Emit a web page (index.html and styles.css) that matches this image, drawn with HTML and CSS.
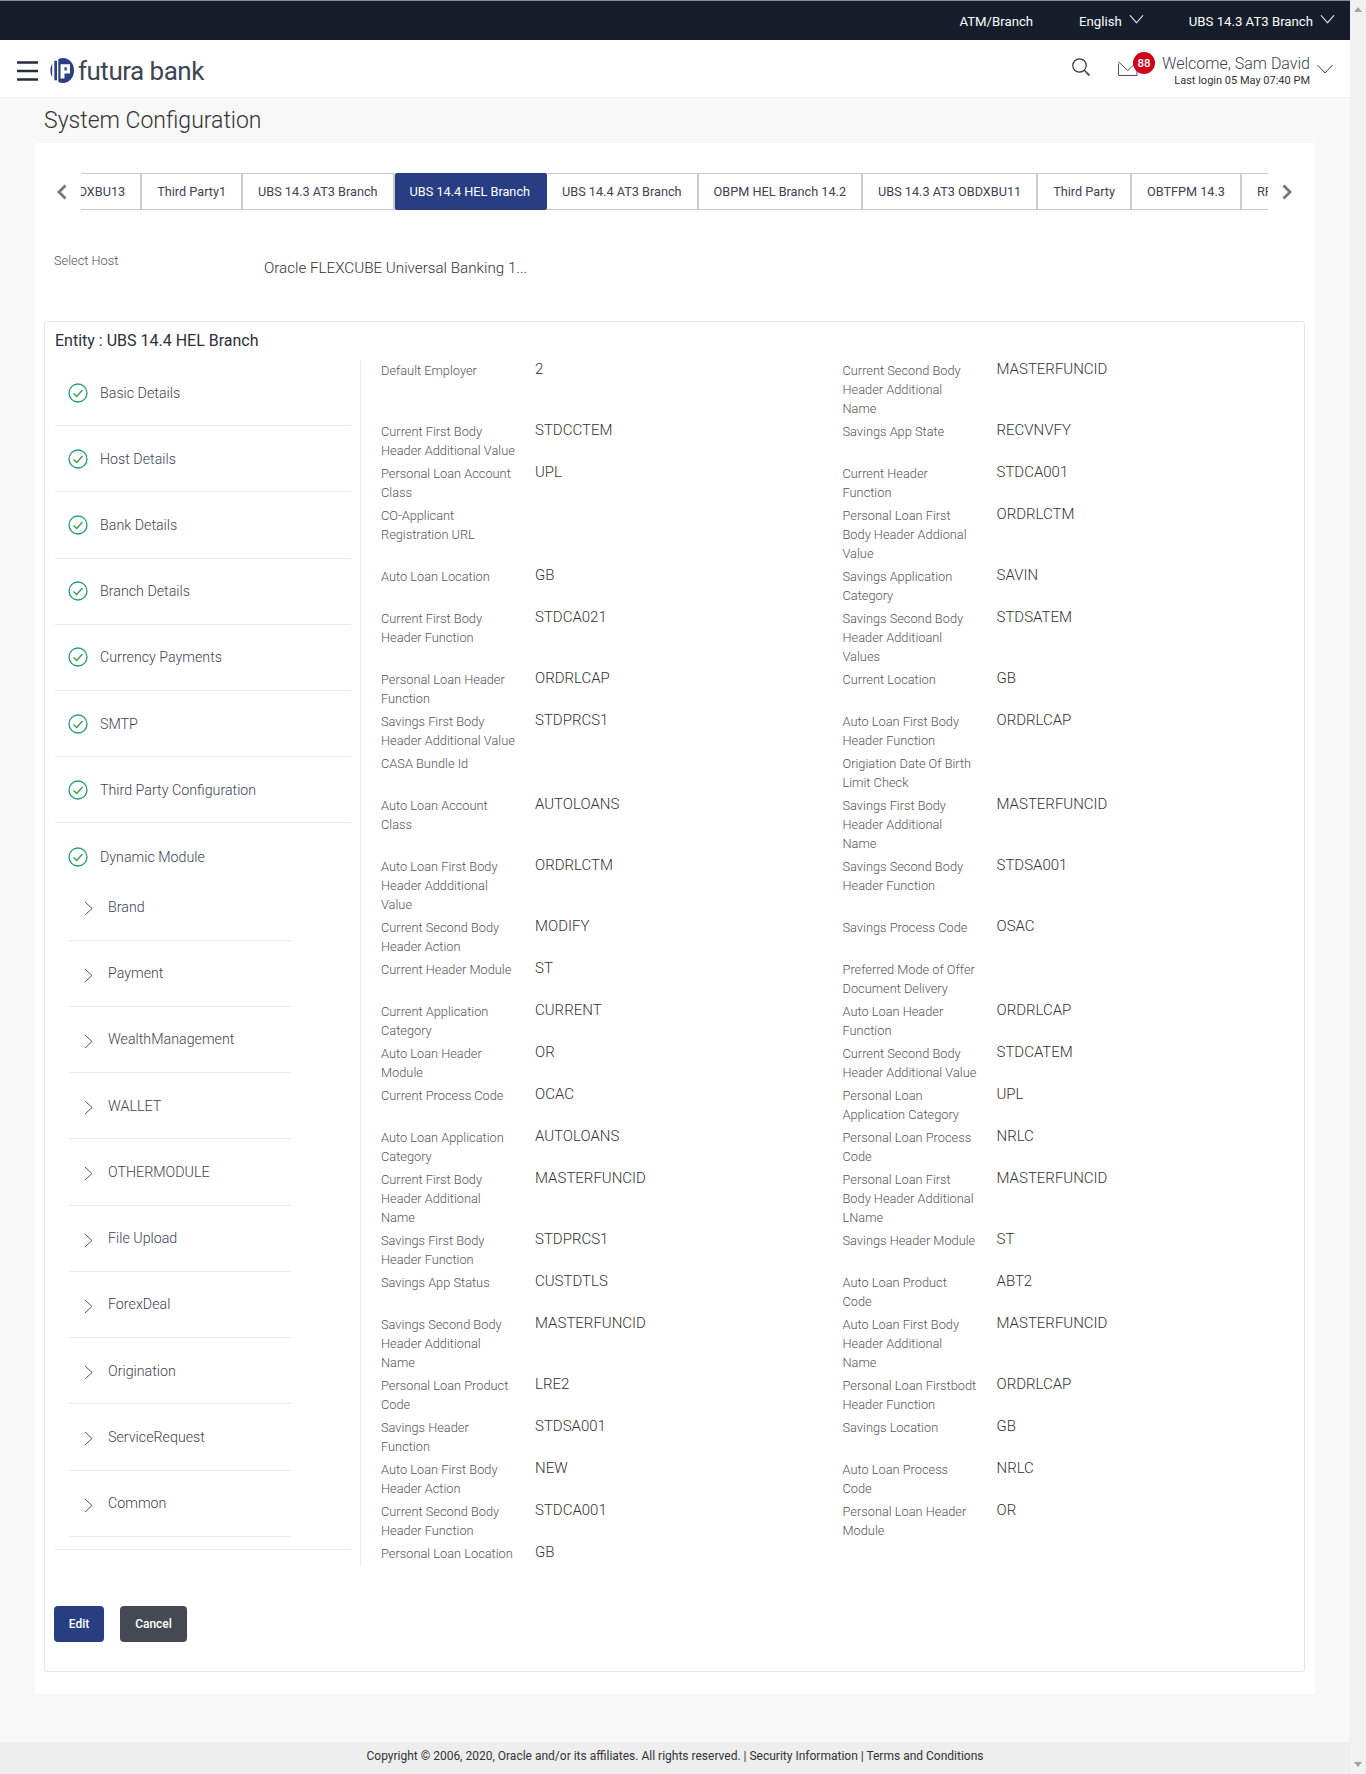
FILE: index.html
```html
<!DOCTYPE html>
<html lang="en">
<head>
<meta charset="utf-8">
<title>System Configuration</title>
<link rel="stylesheet" href="styles.css">
</head>
<body>
<div class="frame">
<div class="page">
  <div class="topbar">
    <span class="top-item atm">ATM/Branch</span>
    <span class="top-item lang">English</span>
    <svg class="top-chev" viewBox="0 0 16 10"><path d="M1 1l7 8 7-8"/></svg>
    <span class="top-item ent">UBS 14.3 AT3 Branch</span>
    <svg class="top-chev last" viewBox="0 0 16 10"><path d="M1 1l7 8 7-8"/></svg>
  </div>
  <header class="header">
    <svg class="burger" viewBox="0 0 21 20"><path d="M0 1.500h21M0 10h21M0 18.500h21"/></svg>
    <svg class="logo" viewBox="0 0 24 25">
      <path class="logo-b" d="M2.200 5.500v14A13 13 0 0 1 .4 12.500 13 13 0 0 1 2.200 5.500z"/>
      <path class="logo-b" d="M4.300 2.800h2.700v19.500h-2.700z"/>
      <path class="logo-b" d="M8.300 1.200A12.500 12.500 0 0 1 13 0c6.500 0 11 5.600 11 12.500S19.500 25 13 25a12.500 12.500 0 0 1-4.700-1z"/>
      <path class="logo-w" d="M10.500 20.500V6.200h9.500v9.300h-5.500v5zM14.500 9.300v3.200h2.200V9.300z"/>
    </svg>
    <span class="brand">futura bank</span>
    <div class="head-right">
      <svg class="search" viewBox="0 0 19 19"><circle cx="7.500" cy="7.500" r="6.700"/><path d="M12.500 12.500l1.500 1.500"/><path class="thick" d="M14 14l3.500 3.500"/></svg>
      <span class="mail">
        <svg class="mail-ico" viewBox="0 0 20 15"><path d="M.5 2.500v12h18.500v-12M.5 .8l9.300 8.700L19 .8"/></svg>
        <span class="badge">88</span>
      </span>
      <div class="welcome">
        <div class="welcome-name">Welcome, Sam David</div>
        <div class="welcome-last">Last login 05 May 07:40 PM</div>
      </div>
      <svg class="user-chev" viewBox="0 0 16 10"><path d="M.5 1l7.500 8 7.500-8"/></svg>
    </div>
  </header>
  <main class="main">
    <h1 class="title">System Configuration</h1>
    <section class="panel">
      <div class="tabs">
        <svg class="arrow" viewBox="0 0 11 16"><path d="M9.500 1.500L3 8l6.500 6.500"/></svg>
        <div class="strip">
          <div class="track">
            <span class="tab">UBS 14.3 AT3 OBDXBU13</span>
            <span class="tab">Third Party1</span>
            <span class="tab">UBS 14.3 AT3 Branch</span>
            <span class="tab active">UBS 14.4 HEL Branch</span>
            <span class="tab">UBS 14.4 AT3 Branch</span>
            <span class="tab">OBPM HEL Branch 14.2</span>
            <span class="tab">UBS 14.3 AT3 OBDXBU11</span>
            <span class="tab">Third Party</span>
            <span class="tab">OBTFPM 14.3</span>
            <span class="tab">RFI</span>
          </div>
        </div>
        <svg class="arrow next" viewBox="0 0 11 16"><path d="M1.500 1.500L8 8l-6.500 6.500"/></svg>
      </div>
      <div class="host">
        <span class="host-label">Select Host</span>
        <span class="host-value">Oracle FLEXCUBE Universal Banking 1...</span>
      </div>
      <div class="box">
        <div class="entity">Entity : UBS 14.4 HEL Branch</div>
        <div class="content">
          <nav class="nav">
            <div class="nav-row"><svg class="check" viewBox="0 0 20 20"><circle cx="10" cy="10" r="9"/><path d="M5.500 10.500l3.200 3 5.800-6.500"/></svg>Basic Details</div>
            <div class="nav-row"><svg class="check" viewBox="0 0 20 20"><circle cx="10" cy="10" r="9"/><path d="M5.500 10.500l3.200 3 5.800-6.500"/></svg>Host Details</div>
            <div class="nav-row"><svg class="check" viewBox="0 0 20 20"><circle cx="10" cy="10" r="9"/><path d="M5.500 10.500l3.200 3 5.800-6.500"/></svg>Bank Details</div>
            <div class="nav-row"><svg class="check" viewBox="0 0 20 20"><circle cx="10" cy="10" r="9"/><path d="M5.500 10.500l3.200 3 5.800-6.500"/></svg>Branch Details</div>
            <div class="nav-row"><svg class="check" viewBox="0 0 20 20"><circle cx="10" cy="10" r="9"/><path d="M5.500 10.500l3.200 3 5.800-6.500"/></svg>Currency Payments</div>
            <div class="nav-row"><svg class="check" viewBox="0 0 20 20"><circle cx="10" cy="10" r="9"/><path d="M5.500 10.500l3.200 3 5.800-6.500"/></svg>SMTP</div>
            <div class="nav-row"><svg class="check" viewBox="0 0 20 20"><circle cx="10" cy="10" r="9"/><path d="M5.500 10.500l3.200 3 5.800-6.500"/></svg>Third Party Configuration</div>
            <div class="nav-group">
              <div class="nav-head"><svg class="check" viewBox="0 0 20 20"><circle cx="10" cy="10" r="9"/><path d="M5.500 10.500l3.200 3 5.800-6.500"/></svg>Dynamic Module</div>
              <div class="sub-row"><svg class="sub-chev" viewBox="0 0 9 15"><path d="M1 1l7 6.500L1 14"/></svg>Brand</div>
              <div class="sub-row"><svg class="sub-chev" viewBox="0 0 9 15"><path d="M1 1l7 6.500L1 14"/></svg>Payment</div>
              <div class="sub-row"><svg class="sub-chev" viewBox="0 0 9 15"><path d="M1 1l7 6.500L1 14"/></svg>WealthManagement</div>
              <div class="sub-row"><svg class="sub-chev" viewBox="0 0 9 15"><path d="M1 1l7 6.500L1 14"/></svg>WALLET</div>
              <div class="sub-row"><svg class="sub-chev" viewBox="0 0 9 15"><path d="M1 1l7 6.500L1 14"/></svg>OTHERMODULE</div>
              <div class="sub-row"><svg class="sub-chev" viewBox="0 0 9 15"><path d="M1 1l7 6.500L1 14"/></svg>File Upload</div>
              <div class="sub-row"><svg class="sub-chev" viewBox="0 0 9 15"><path d="M1 1l7 6.500L1 14"/></svg>ForexDeal</div>
              <div class="sub-row"><svg class="sub-chev" viewBox="0 0 9 15"><path d="M1 1l7 6.500L1 14"/></svg>Origination</div>
              <div class="sub-row"><svg class="sub-chev" viewBox="0 0 9 15"><path d="M1 1l7 6.500L1 14"/></svg>ServiceRequest</div>
              <div class="sub-row"><svg class="sub-chev" viewBox="0 0 9 15"><path d="M1 1l7 6.500L1 14"/></svg>Common</div>
            </div>
          </nav>
          <div class="form">
            <div class="field"><span class="lab">Default Employer</span><span class="val">2</span></div>
            <div class="field"><span class="lab">Current Second Body Header Additional Name</span><span class="val">MASTERFUNCID</span></div>
            <div class="field"><span class="lab">Current First Body Header Additional Value</span><span class="val">STDCCTEM</span></div>
            <div class="field"><span class="lab">Savings App State</span><span class="val">RECVNVFY</span></div>
            <div class="field"><span class="lab">Personal Loan Account Class</span><span class="val">UPL</span></div>
            <div class="field"><span class="lab">Current Header<br>Function</span><span class="val">STDCA001</span></div>
            <div class="field"><span class="lab">CO-Applicant<br>Registration URL</span><span class="val"></span></div>
            <div class="field"><span class="lab">Personal Loan First Body Header Addional Value</span><span class="val">ORDRLCTM</span></div>
            <div class="field"><span class="lab">Auto Loan Location</span><span class="val">GB</span></div>
            <div class="field"><span class="lab">Savings Application Category</span><span class="val">SAVIN</span></div>
            <div class="field"><span class="lab">Current First Body Header Function</span><span class="val">STDCA021</span></div>
            <div class="field"><span class="lab">Savings Second Body Header Additioanl Values</span><span class="val">STDSATEM</span></div>
            <div class="field"><span class="lab">Personal Loan Header Function</span><span class="val">ORDRLCAP</span></div>
            <div class="field"><span class="lab">Current Location</span><span class="val">GB</span></div>
            <div class="field"><span class="lab">Savings First Body Header Additional Value</span><span class="val">STDPRCS1</span></div>
            <div class="field"><span class="lab">Auto Loan First Body Header Function</span><span class="val">ORDRLCAP</span></div>
            <div class="field"><span class="lab">CASA Bundle Id</span><span class="val"></span></div>
            <div class="field"><span class="lab">Origiation Date Of Birth Limit Check</span><span class="val"></span></div>
            <div class="field"><span class="lab">Auto Loan Account<br>Class</span><span class="val">AUTOLOANS</span></div>
            <div class="field"><span class="lab">Savings First Body Header Additional Name</span><span class="val">MASTERFUNCID</span></div>
            <div class="field"><span class="lab">Auto Loan First Body Header Addditional Value</span><span class="val">ORDRLCTM</span></div>
            <div class="field"><span class="lab">Savings Second Body Header Function</span><span class="val">STDSA001</span></div>
            <div class="field"><span class="lab">Current Second Body Header Action</span><span class="val">MODIFY</span></div>
            <div class="field"><span class="lab">Savings Process Code</span><span class="val">OSAC</span></div>
            <div class="field"><span class="lab">Current Header Module</span><span class="val">ST</span></div>
            <div class="field"><span class="lab">Preferred Mode of Offer Document Delivery</span><span class="val"></span></div>
            <div class="field"><span class="lab">Current Application Category</span><span class="val">CURRENT</span></div>
            <div class="field"><span class="lab">Auto Loan Header<br>Function</span><span class="val">ORDRLCAP</span></div>
            <div class="field"><span class="lab">Auto Loan Header<br>Module</span><span class="val">OR</span></div>
            <div class="field"><span class="lab">Current Second Body Header Additional Value</span><span class="val">STDCATEM</span></div>
            <div class="field"><span class="lab">Current Process Code</span><span class="val">OCAC</span></div>
            <div class="field"><span class="lab">Personal Loan Application Category</span><span class="val">UPL</span></div>
            <div class="field"><span class="lab">Auto Loan Application Category</span><span class="val">AUTOLOANS</span></div>
            <div class="field"><span class="lab">Personal Loan Process Code</span><span class="val">NRLC</span></div>
            <div class="field"><span class="lab">Current First Body Header Additional Name</span><span class="val">MASTERFUNCID</span></div>
            <div class="field"><span class="lab">Personal Loan First Body Header Additional LName</span><span class="val">MASTERFUNCID</span></div>
            <div class="field"><span class="lab">Savings First Body Header Function</span><span class="val">STDPRCS1</span></div>
            <div class="field"><span class="lab">Savings Header Module</span><span class="val">ST</span></div>
            <div class="field"><span class="lab">Savings App Status</span><span class="val">CUSTDTLS</span></div>
            <div class="field"><span class="lab">Auto Loan Product Code</span><span class="val">ABT2</span></div>
            <div class="field"><span class="lab">Savings Second Body Header Additional Name</span><span class="val">MASTERFUNCID</span></div>
            <div class="field"><span class="lab">Auto Loan First Body Header Additional Name</span><span class="val">MASTERFUNCID</span></div>
            <div class="field"><span class="lab">Personal Loan Product Code</span><span class="val">LRE2</span></div>
            <div class="field"><span class="lab">Personal Loan Firstbodt Header Function</span><span class="val">ORDRLCAP</span></div>
            <div class="field"><span class="lab">Savings Header<br>Function</span><span class="val">STDSA001</span></div>
            <div class="field"><span class="lab">Savings Location</span><span class="val">GB</span></div>
            <div class="field"><span class="lab">Auto Loan First Body Header Action</span><span class="val">NEW</span></div>
            <div class="field"><span class="lab">Auto Loan Process Code</span><span class="val">NRLC</span></div>
            <div class="field"><span class="lab">Current Second Body Header Function</span><span class="val">STDCA001</span></div>
            <div class="field"><span class="lab">Personal Loan Header Module</span><span class="val">OR</span></div>
            <div class="field"><span class="lab">Personal Loan Location</span><span class="val">GB</span></div>
          </div>
        </div>
        <div class="actions">
          <button class="btn primary">Edit</button>
          <button class="btn secondary">Cancel</button>
        </div>
      </div>
    </section>
  </main>
  <footer class="footer">Copyright © 2006, 2020, Oracle and/or its affiliates. All rights reserved. | Security Information | Terms and Conditions</footer>
</div>
<aside class="scrollbar">
  <span class="sb-up"></span>
  <span class="sb-down"></span>
</aside>
</div>
</body>
</html>
```

FILE: styles.css
```css
* { box-sizing: border-box; }
html, body { margin: 0; padding: 0; }
body { font-family: Roboto, "Liberation Sans", sans-serif; color: #333; background: #f8f8f8; }
svg { display: block; fill: none; }

.frame { display: flex; width: 1366px; height: 1774px; overflow: hidden; }
.page { width: 1350px; display: flex; flex-direction: column; flex: none; }

.scrollbar { width: 16px; background: #f1f1f1; display: flex; flex-direction: column; justify-content: space-between; align-items: center; padding: 7px 0; }
.sb-up { width: 0; height: 0; border: 4px solid transparent; border-top: 0; border-bottom: 5px solid #a3a3a3; }
.sb-down { width: 0; height: 0; border: 4px solid transparent; border-bottom: 0; border-top: 5px solid #a3a3a3; }

.topbar { height: 40px; background: #161d2b; border-top: 1px solid #8a8d94; display: flex; align-items: center; padding: 3px 15px 0 0; justify-content: flex-end; color: #fff; font-size: 13.200px; }
.top-item { line-height: 18px; }
.atm { margin-right: 46px; }
.lang { margin-right: 7px; }
.ent { margin-left: 45px; margin-right: 7px; }
.top-chev { width: 15px; height: 10px; margin-top: -6px; }
.top-chev path { stroke: #fff; stroke-width: 1.200; }

.header { height: 58px; background: #fff; border-bottom: 1px solid #eee; display: flex; align-items: center; padding: 4px 17px 0; }
.burger { width: 21px; height: 20px; margin-right: 12px; flex: none; }
.burger path { stroke: #262d3b; stroke-width: 2.600; }
.logo { width: 24px; height: 25px; margin-right: 4px; flex: none; }
.logo-b { fill: #2a3f86; }
.logo-w { fill: #fff; }
.brand { font-size: 26px; color: #3d4552; line-height: 32px; letter-spacing: -.5px; }
.head-right { margin-left: auto; display: flex; align-items: center; }
.search { width: 19px; height: 19px; margin-right: 27px; margin-top: -6px; }
.search circle, .search path { stroke: #2e3645; stroke-width: 1.200; }
.search .thick { stroke-width: 2.200; stroke: #59606c; }
.mail { position: relative; width: 20px; height: 15px; margin-right: 24px; margin-top: -5px; }
.mail-ico { width: 20px; height: 15px; }
.mail-ico path { stroke: #4a5160; stroke-width: 1; }
.badge { position: absolute; left: 15px; top: -9px; width: 22px; height: 22px; border-radius: 50%; background: #d0021b; color: #fff; font-size: 11.500px; font-weight: 500; line-height: 22px; text-align: center; }
.welcome { text-align: right; margin-right: 7px; }
.welcome-name { font-size: 16px; font-weight: 300; line-height: 20px; color: #3a4250; }
.welcome-last { font-size: 11px; line-height: 14px; color: #333; }
.user-chev { width: 16px; height: 10px; margin-top: -3px; }
.user-chev path { stroke: #3a4250; stroke-width: 1; }

.main { flex: 1; display: flex; flex-direction: column; }
.title { margin: 0; padding-left: 44px; height: 45px; font-size: 23px; font-weight: 300; line-height: 46px; color: #333; }
.panel { margin-left: 35px; width: 1280px; height: 1551px; background: #fff; padding: 30px 10px 0 9px; }

.tabs { display: flex; align-items: center; margin-left: -9px; margin-right: -10px; }
.arrow { width: 11px; height: 16px; margin-left: 21px; margin-right: 14px; flex: none; }
.arrow path { stroke: #777; stroke-width: 2.800; }
.arrow.next { margin-left: 14px; margin-right: 0; }
.strip { width: 1187px; height: 37px; overflow: hidden; flex: none; }
.track { display: flex; height: 37px; margin-left: -114px; width: max-content; }
.tab { height: 37px; padding: 0 15px; border: 1px solid #ccc; border-left: 0; border-right-width: 2px; font-size: 12.700px; line-height: 35px; white-space: nowrap; color: #3c4354; font-weight: 400; }
.tab.active { background: #283e82; color: #fff; border-color: #283e82; border-radius: 2px; }

.host { height: 111px; display: flex; align-items: flex-start; padding-left: 10px; }
.host-label { width: 210px; margin-top: 43px; font-size: 12.800px; font-weight: 300; line-height: 16px; color: #555; }
.host-value { margin-top: 49px; font-size: 15.200px; font-weight: 300; line-height: 18px; color: #333; }

.box { height: 1351px; width: 1261px; border: 1px solid #e6e6e6; border-radius: 3px; padding-left: 9px; }
.entity { height: 38px; padding-left: 1px; font-size: 16px; line-height: 38px; color: #2b303a; }
.content { display: flex; height: 1206px; }
.nav { width: 296px; margin-left: 1px; font-size: 14.250px; font-weight: 300; color: #3c4354; flex: none; }
.nav-row { height: 66.200px; border-bottom: 1px solid #e9e9e9; display: flex; align-items: center; padding-left: 13px; gap: 12px; }
.check { width: 20px; height: 20px; flex: none; }
.check circle { stroke: #1f9d7a; stroke-width: 1.300; }
.check path { stroke: #3d9a4c; stroke-width: 1.300; }
.nav-group { height: 727px; border-bottom: 1px solid #e9e9e9; }
.nav-head { height: 51px; display: flex; align-items: center; padding-left: 13px; gap: 12px; padding-top: 17px; }
.sub-row { height: 66.250px; width: 222px; margin-left: 14px; border-bottom: 1px solid #e9e9e9; display: flex; align-items: center; padding-left: 15px; gap: 15px; }
.sub-chev { width: 9px; height: 15px; flex: none; margin-top: 4px; }
.sub-chev path { stroke: #555; stroke-width: 1; }

.form { margin-left: 9px; flex: 1; border-left: 1px solid #eee; padding: 1px 0 0 20px; display: grid; grid-template-columns: 461.500px 1fr; row-gap: 4px; align-content: start; }
.field { display: grid; grid-template-columns: 154px 1fr; }
.lab { display: block; width: 135.500px; font-size: 12.800px; font-weight: 300; line-height: 19px; color: #555; }
.val { display: block; font-size: 15px; font-weight: 300; line-height: 17px; color: #333; }

.actions { display: flex; gap: 16px; margin-top: 40px; }
.btn { height: 36px; border: 0; border-radius: 4px; font-family: inherit; font-size: 12px; font-weight: 500; color: #fff; padding: 0; }
.btn.primary { width: 50px; background: #283e82; }
.btn.secondary { width: 67px; background: #444954; }

.footer { height: 32px; background: #eee; font-size: 12px; line-height: 28px; text-align: center; color: #333; }
```
